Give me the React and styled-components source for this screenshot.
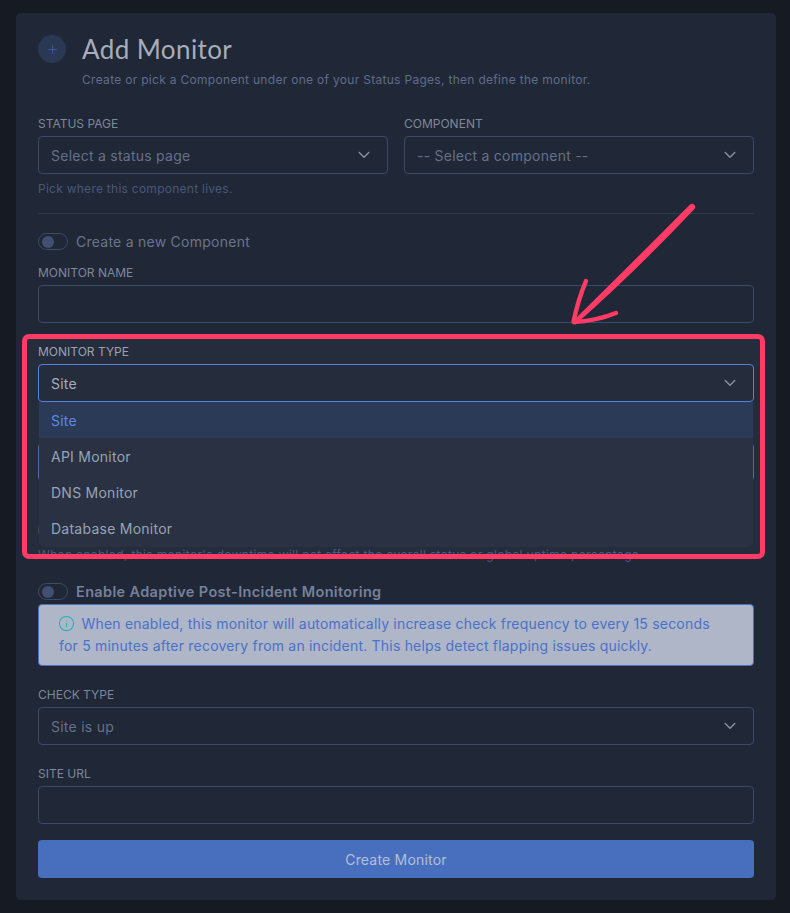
import React from 'react'
import styled, { createGlobalStyle } from 'styled-components'
import { Info, Plus } from 'lucide-react'

const Global = createGlobalStyle`
  html, body { margin: 0; padding: 0; background: #161a23; }
  body { font-family: Inter, "Liberation Sans", sans-serif; -webkit-font-smoothing: antialiased; }
`

const Page = styled.div`
  height: 913px;
  overflow: hidden;
  padding: 13px 14px 0 16px;
  box-sizing: border-box;
`

const Card = styled.main`
  position: relative;
  background: #202736;
  border-radius: 5px;
  padding: 22px;
  height: 887px;
  box-sizing: border-box;
`

const Header = styled.header`
  display: flex;
  gap: 16px;
  margin-bottom: 25px;
`

const Badge = styled.div`
  width: 28px;
  height: 28px;
  border-radius: 50%;
  background: #2a3853;
  color: #3f63ad;
  display: flex;
  align-items: center;
  justify-content: center;
`

const Title = styled.h1`
  margin: 0;
  font-family: Lato, sans-serif;
  font-size: 26px;
  font-weight: 400;
  letter-spacing: 0.4px;
  line-height: 28px;
  color: #a7adba;
`

const Subtitle = styled.p`
  margin: 8px 0 0;
  font-size: 12px;
  line-height: 18px;
  letter-spacing: 0.3px;
  color: #5f6d8b;
`

const TwoColumns = styled.div`
  display: grid;
  grid-template-columns: 1fr 1fr;
  gap: 16px;
`

const Field = styled.div`
  position: relative;
  margin-bottom: ${p => p.$gap ?? 19}px;
`

const Label = styled.label`
  display: block;
  font-size: 12px;
  line-height: 20px;
  margin-bottom: 2px;
  text-transform: uppercase;
  color: ${p => (p.$bright ? '#98a1b3' : '#7f8899')};
`

const Control = styled.div`
  height: 38px;
  box-sizing: border-box;
  border: 1px solid ${p => p.$border ?? '#3a4a69'};
  border-radius: 4px;
  padding: 0 12px;
  display: flex;
  align-items: center;
  justify-content: space-between;
  font-size: 14px;
  letter-spacing: 0.25px;
  color: ${p => (p.$open ? '#a3adc0' : '#657188')};
`

const Chevron = styled.svg`
  width: 12px;
  height: 8px;
  margin-right: 5px;
  fill: none;
  stroke: #868ea0;
  stroke-width: 1.5;
  stroke-linecap: round;
  stroke-linejoin: round;
`

const Hint = styled.p`
  margin: 6px 0 0;
  font-size: 12px;
  line-height: 18px;
  letter-spacing: ${p => p.$spacing ?? 0.26}px;
  color: #48587a;
`

const Divider = styled.hr`
  border: 0;
  height: 1px;
  background: #2e394e;
  margin: 15px 0 19px;
`

const ToggleRow = styled.div`
  display: flex;
  align-items: center;
  gap: 8px;
  margin: ${p => p.$top ?? 0}px 0 ${p => p.$gap}px;
  min-height: 17px;
  font-size: ${p => (p.$strong ? 14.5 : 14)}px;
  line-height: 17px;
  letter-spacing: ${p => (p.$strong ? 0.35 : 0.25)}px;
  font-weight: ${p => (p.$strong ? 600 : 400)};
  color: ${p => (p.$strong ? '#75819a' : '#6a758c')};
`

const Toggle = styled.span`
  width: 30px;
  height: 17px;
  box-sizing: border-box;
  border: 1px solid #3d4c6a;
  border-radius: 9px;
  padding: 1.5px 3px;
  flex: none;
  &::before {
    content: '';
    display: block;
    width: 12px;
    height: 12px;
    border-radius: 50%;
    background: #415070;
  }
`

const Alert = styled.div`
  background: #aeb6c7;
  border: 1px solid #4a6fbf;
  border-radius: 4px;
  padding: 7.5px 32px 7.5px 20px;
  font-size: 14px;
  line-height: 22.5px;
  letter-spacing: 0.2px;
  color: #4a72c8;
  margin-bottom: 19px;
  svg {
    color: #1fb2b8;
    vertical-align: -3px;
    margin: 0 7px 0 -1.5px;
  }
`

const Submit = styled.button`
  display: block;
  width: 100%;
  height: 38px;
  margin-top: 16px;
  border: 0;
  border-radius: 4px;
  background: #476fbd;
  color: #b3bfd6;
  font-family: inherit;
  font-size: 14px;
  letter-spacing: 0.2px;
`

const Dropdown = styled.ul`
  position: absolute;
  top: 60px;
  left: 1px;
  right: 1px;
  z-index: 5;
  margin: 0;
  padding: 0 0 1px;
  list-style: none;
  background: #293142;
  border-radius: 0 0 5px 5px;
`

const Option = styled.li`
  height: 36px;
  padding: 0 12px;
  display: flex;
  align-items: center;
  font-size: 14px;
  letter-spacing: 0.25px;
  background: ${p => (p.$active ? '#2b3a56' : 'transparent')};
  color: ${p => (p.$active ? '#5b87e8' : '#98a3b8')};
`

/* annotation drawn over the screenshot */
const Highlight = styled.div`
  position: absolute;
  left: 6px;
  top: 320.5px;
  width: 743px;
  height: 225px;
  box-sizing: border-box;
  border: 5.5px solid #ff3b66;
  border-radius: 7px;
  background: rgba(200, 220, 255, 0.03);
  z-index: 4;
  pointer-events: none;
`

const Arrow = styled.svg`
  position: absolute;
  left: 544px;
  top: 182px;
  width: 145px;
  height: 140px;
  z-index: 4;
`

const ChevronDown = () => (
  <Chevron viewBox="0 0 12 8">
    <path d="M1.25 1.5l4.75 4.75 4.75-4.75" />
  </Chevron>
)

const Select = ({ value, open }) => (
  <Control $open={open} $border={open ? '#4f7fdc' : undefined}>
    <span>{value}</span>
    <ChevronDown />
  </Control>
)

const options = ['Site', 'API Monitor', 'DNS Monitor', 'Database Monitor']

export default function App() {
  return (
    <Page>
      <Global />
      <Card>
        <Header>
          <Badge><Plus size={13} strokeWidth={1.5} /></Badge>
          <div>
            <Title>Add Monitor</Title>
            <Subtitle>Create or pick a Component under one of your Status Pages, then define the monitor.</Subtitle>
          </div>
        </Header>

        <TwoColumns>
          <div>
            <Label>Status Page</Label>
            <Select value="Select a status page" />
            <Hint>Pick where this component lives.</Hint>
          </div>
          <div>
            <Label>Component</Label>
            <Select value="-- Select a component --" />
          </div>
        </TwoColumns>

        <Divider />

        <ToggleRow $gap={13}>
          <Toggle />
          Create a new Component
        </ToggleRow>

        <Field>
          <Label>Monitor Name</Label>
          <Control />
        </Field>

        <Field>
          <Label $bright>Monitor Type</Label>
          <Select value="Site" open />
          <Dropdown>
            {options.map((o, i) => (
              <Option key={o} $active={i === 0}>{o}</Option>
            ))}
          </Dropdown>
        </Field>

        {/* these two sit behind the open menu, only their edges show */}
        <Field $gap={41}>
          <Label>&nbsp;</Label>
          <Control $border="#4f6a9e" />
        </Field>

        <ToggleRow $gap={7}>
          <Toggle />
        </ToggleRow>
        <Hint $spacing={0.34}>When enabled, this monitor's downtime will not affect the overall status or global uptime percentage.</Hint>

        <ToggleRow $strong $top={19} $gap={4}>
          <Toggle />
          Enable Adaptive Post-Incident Monitoring
        </ToggleRow>
        <Alert>
          <Info size={17} strokeWidth={1.5} />
          When enabled, this monitor will automatically increase check frequency to every 15 seconds for 5 minutes after recovery from an incident. This helps detect flapping issues quickly.
        </Alert>

        <Field>
          <Label>Check Type</Label>
          <Select value="Site is up" />
        </Field>

        <Field $gap={0}>
          <Label>Site URL</Label>
          <Control />
        </Field>

        <Submit>Create Monitor</Submit>

        <Highlight />
        <Arrow viewBox="0 0 145 140" fill="#ff3b66">
          <path d="M129.8 9.8Q70 70 13 126L15 130Q75 77 134.2 14.2A3.1 3.1 0 0 0 129.8 9.8Z" />
          <path d="M26 86Q18 105 13.5 127Q36 126 56 118" fill="none" stroke="#ff3b66" strokeWidth="4.5" strokeLinecap="round" strokeLinejoin="round" />
        </Arrow>
      </Card>
    </Page>
  )
}
